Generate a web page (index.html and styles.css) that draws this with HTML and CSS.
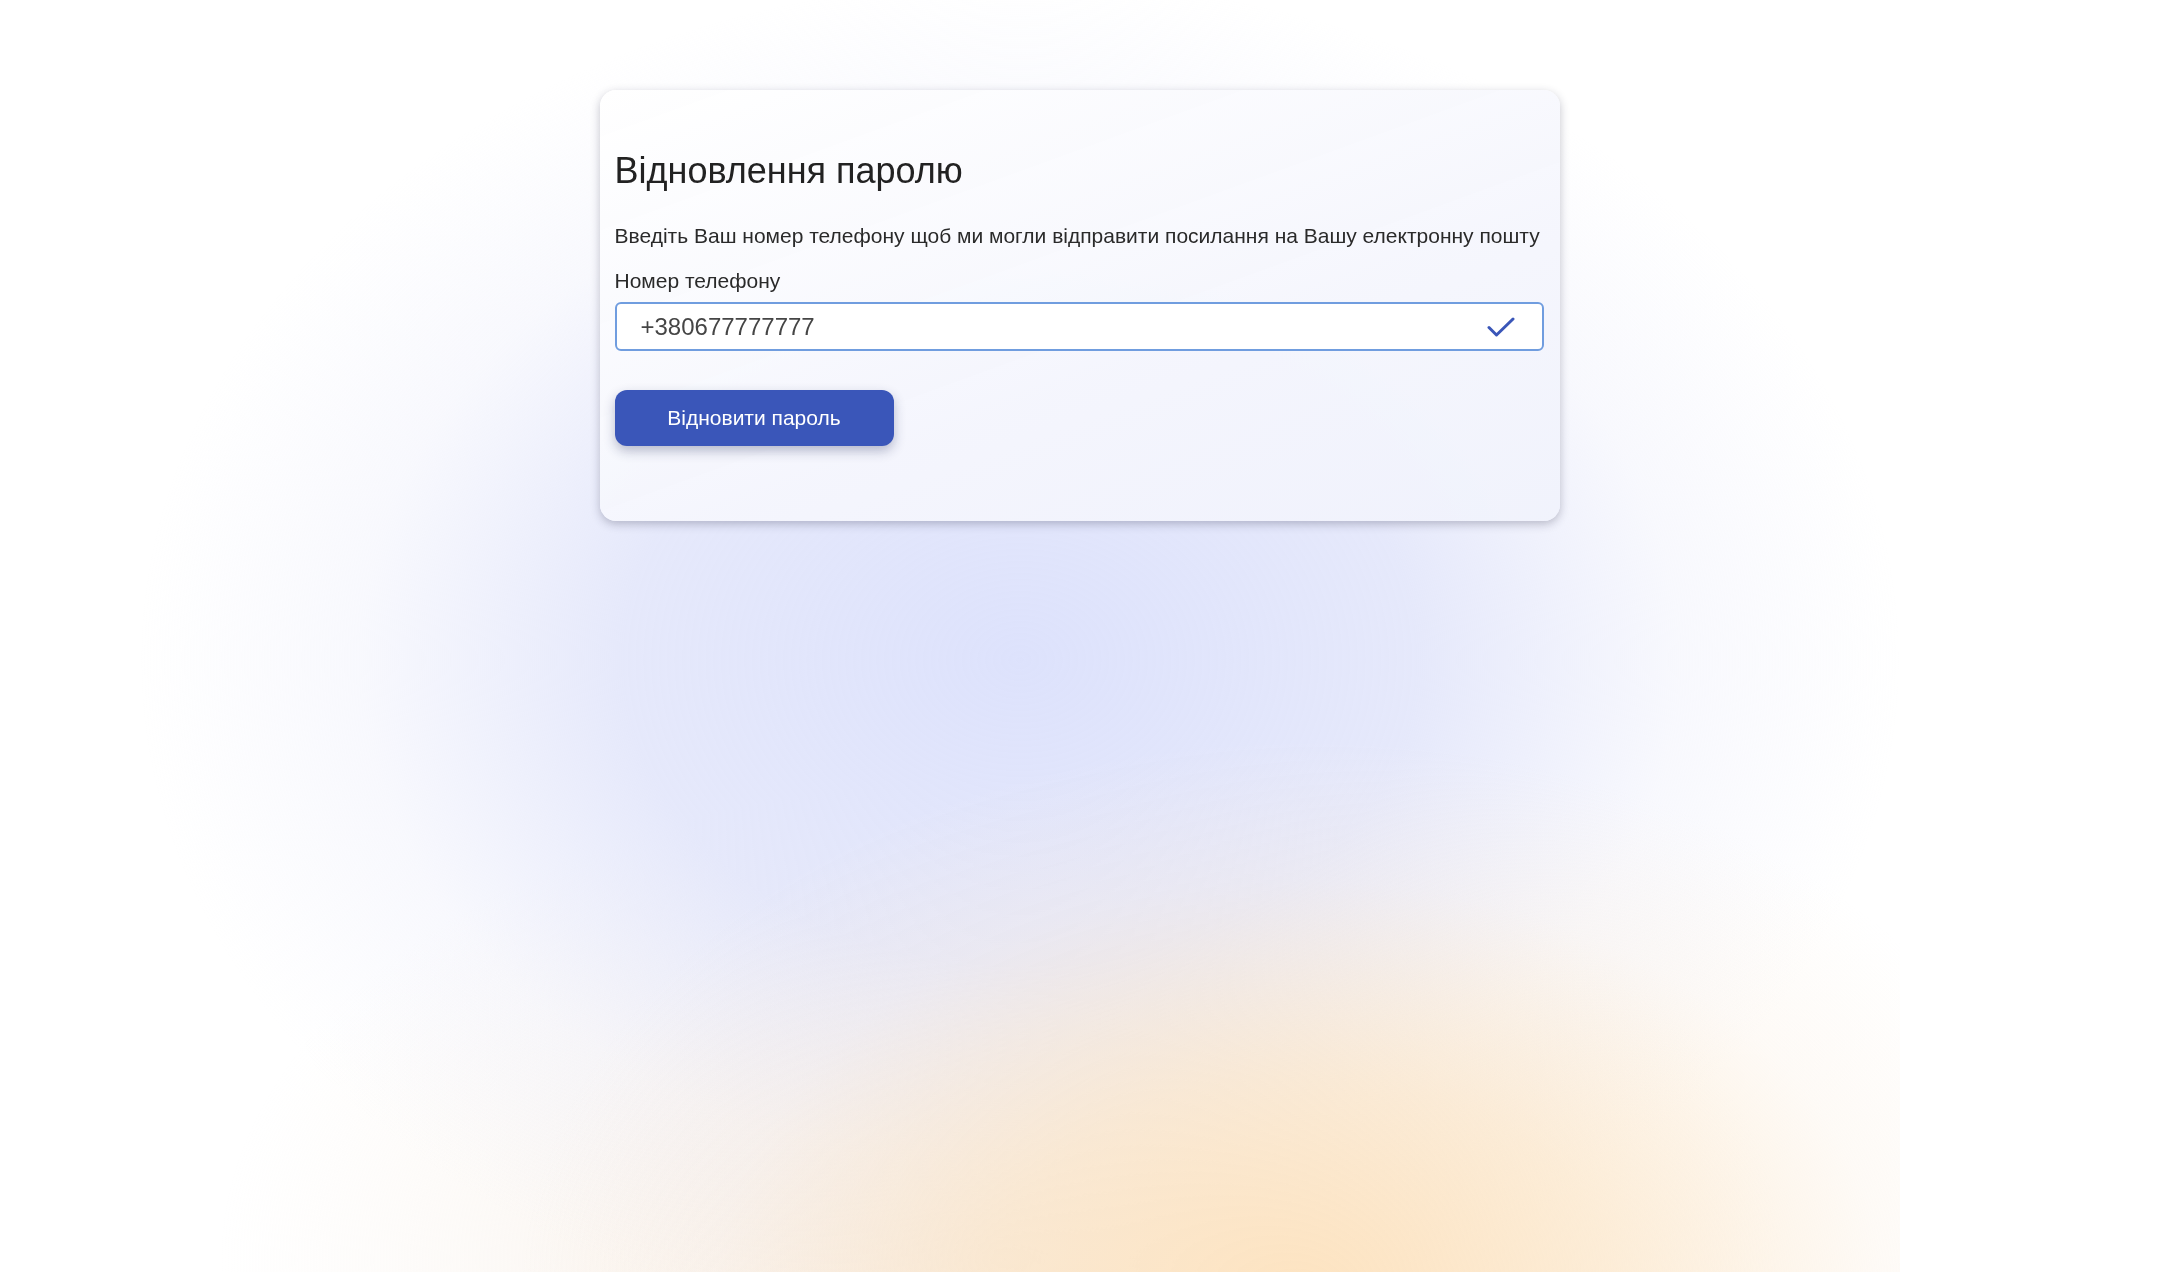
FILE: index.html
```html
<!DOCTYPE html>
<html lang="uk">
<head>
<meta charset="utf-8">
<title>Відновлення паролю</title>
<link rel="stylesheet" href="styles.css">
</head>
<body>
<div class="backdrop" aria-hidden="true"></div>
<main class="page">
  <section class="card">
    <h2 class="title">Відновлення паролю</h2>
    <p class="lead">Введіть Ваш номер телефону щоб ми могли відправити посилання на Вашу електронну пошту</p>
    <label class="label" for="phone">Номер телефону</label>
    <div class="field">
      <input id="phone" class="input" type="text" value="+380677777777">
      <svg class="check" viewBox="0 0 28 20" width="28" height="20" aria-hidden="true">
        <path d="M2 10.5 L9.5 18 L26 2" fill="none" stroke="#3a56b8" stroke-width="3" stroke-linecap="round" stroke-linejoin="round"/>
      </svg>
    </div>
    <button class="btn" type="button">Відновити пароль</button>
  </section>
</main>
</body>
</html>
```

FILE: styles.css
```css
* { box-sizing: border-box; }
html, body { margin: 0; padding: 0; }
body {
  background: #ffffff;
  font-family: "Liberation Sans", Arial, sans-serif;
  color: #212529;
  min-height: 1272px;
}
.backdrop {
  position: fixed;
  left: 0;
  top: 0;
  width: 1900px;
  height: 100%;
  z-index: 0;
  background:
    radial-gradient(ellipse 780px 560px at 1300px 1300px, rgba(253,227,192,1) 0%, rgba(252,230,200,0.7) 40%, rgba(250,236,220,0.25) 75%, rgba(250,240,230,0) 100%),
    radial-gradient(ellipse 880px 680px at 1020px 660px, rgba(221,226,252,1) 0%, rgba(223,227,250,0.8) 45%, rgba(232,234,250,0.3) 75%, rgba(240,240,252,0) 100%),
    radial-gradient(ellipse 780px 480px at 1000px 1260px, rgba(244,232,222,0.85) 0%, rgba(248,240,232,0.3) 70%, rgba(250,245,240,0) 100%);
}
.page {
  position: relative;
  z-index: 1;
  display: flex;
  justify-content: center;
  padding-top: 90px;
}
.card {
  width: 960px;
  padding: 59px 16px 75px 15px;
  border-radius: 16px;
  background: linear-gradient(160deg, rgba(255,255,255,0.97) 0%, rgba(245,246,253,0.95) 60%, rgba(240,242,252,0.95) 100%);
  box-shadow: 0 3px 10px rgba(40,40,70,0.28);
  display: flex;
  flex-direction: column;
  align-items: flex-start;
}
.title {
  margin: 0;
  font-size: 36px;
  font-weight: 400;
  line-height: 1.2;
  color: #222;
}
.lead {
  margin: 28px 0 0;
  font-size: 21px;
  line-height: 1.5;
  color: #2a2a2a;
}
.label {
  margin-top: 13px;
  font-size: 21px;
  line-height: 1.5;
  color: #2a2a2a;
}
.field {
  position: relative;
  width: 100%;
  margin-top: 6px;
}
.input {
  display: block;
  width: 100%;
  height: 49px;
  padding: 0 60px 0 24px;
  border: 2px solid #709ddf;
  border-radius: 6px;
  background: #ffffff;
  font-family: "Liberation Sans", Arial, sans-serif;
  font-size: 24px;
  color: #454545;
  outline: none;
}
.check {
  position: absolute;
  right: 29px;
  top: 15px;
}
.btn {
  margin-top: 39px;
  width: 279px;
  height: 56px;
  border: 0;
  border-radius: 12px;
  background: #3a56b9;
  color: #ffffff;
  font-family: "Liberation Sans", Arial, sans-serif;
  font-size: 21px;
  box-shadow: 0 5px 12px rgba(30,40,90,0.3);
  cursor: pointer;
}
```
